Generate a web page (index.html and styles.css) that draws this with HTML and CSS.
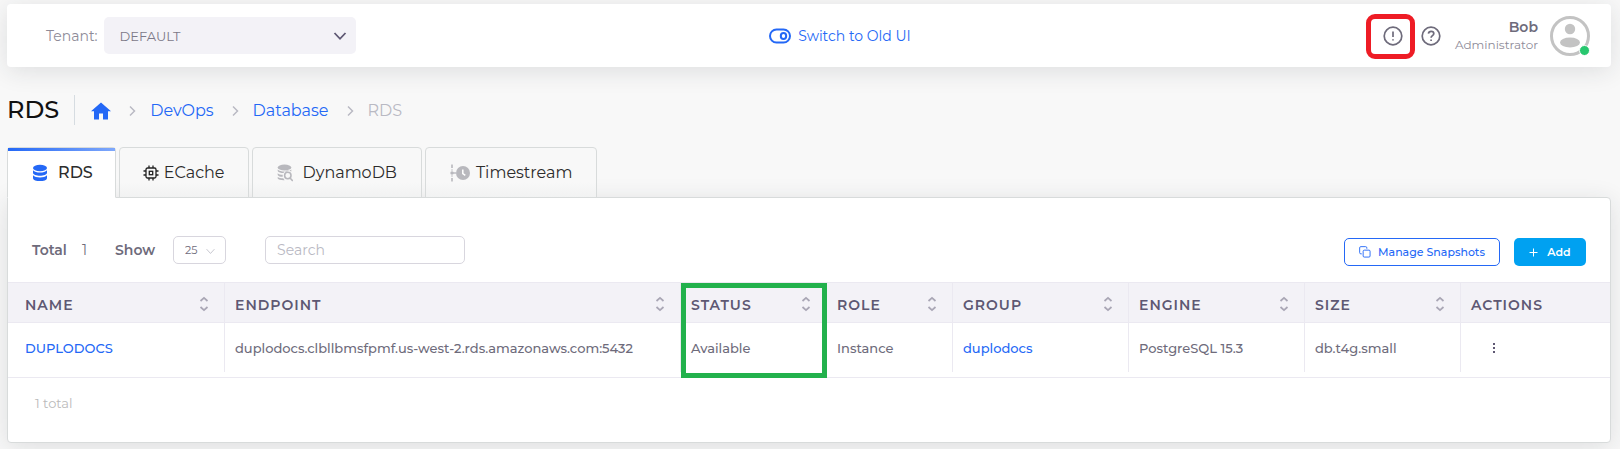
FILE: index.html
```html
<!DOCTYPE html>
<html lang="en">
<head>
<meta charset="utf-8">
<title>RDS</title>
<link rel="stylesheet" href="styles.css">
</head>
<body>
<svg class="sprite" aria-hidden="true">
  <symbol id="chevron-right" viewBox="0 0 14 14"><path d="M5 2.500l4.500 4.500L5 11.500"/></symbol>
  <symbol id="sort" viewBox="0 0 10 16"><path d="M1.500 5L5 1.800 8.500 5M1.500 11L5 14.200 8.500 11"/></symbol>
</svg>

<header class="topbar">
  <div class="tenant">
    <label for="tenant">Tenant:</label>
    <span class="select-wrap">
      <select id="tenant" class="tenant-select"><option>DEFAULT</option></select>
      <svg class="caret caret-lg" viewBox="0 0 14 14"><path d="M1.500 4L7 9.800 12.500 4"/></svg>
    </span>
  </div>
  <a class="switch" href="#">
    <svg class="switch-icon" viewBox="0 0 22 16"><rect x="1" y="1.500" width="20" height="13" rx="6.500"/><ellipse cx="14.500" cy="8" rx="2.700" ry="3"/></svg>
    Switch to Old UI
  </a>
  <div class="user-area">
    <button class="icon-btn flagged" aria-label="Alerts">
      <svg class="round-icon" viewBox="0 0 20 20"><circle cx="10" cy="10" r="8.800"/><path d="M10 5.500v5.500M10 13.200v1.300"/></svg>
    </button>
    <button class="icon-btn" aria-label="Help">
      <svg class="round-icon" viewBox="0 0 20 20"><circle cx="10" cy="10" r="8.800"/><path d="M7.400 7.600c.300-1.500 1.400-2.200 2.700-2.200 1.500 0 2.700.900 2.700 2.300 0 1.900-2.700 2-2.700 4M10.100 13.600v1.300"/></svg>
    </button>
    <div class="user-text"><strong>Bob</strong><span>Administrator</span></div>
    <div class="avatar">
      <svg viewBox="0 0 40 40"><circle cx="20" cy="20" r="18.500" fill="#fff" stroke="#c3c3c3" stroke-width="3"/><circle cx="20" cy="13" r="5.200" fill="#c3c3c3"/><ellipse cx="20" cy="26.500" rx="10" ry="5" fill="#c3c3c3"/></svg>
      <span class="online"></span>
    </div>
  </div>
</header>

<div class="page-head">
  <h1>RDS</h1>
  <nav class="crumbs" aria-label="Breadcrumb">
    <a href="#" aria-label="Home"><svg class="home" viewBox="0 0 20 18"><path d="M10 .500L0 9.300h3V17.500h5v-6h4v6h5V9.300h3z"/></svg></a>
    <svg class="sep"><use href="#chevron-right"/></svg>
    <a href="#">DevOps</a>
    <svg class="sep"><use href="#chevron-right"/></svg>
    <a href="#">Database</a>
    <svg class="sep"><use href="#chevron-right"/></svg>
    <span>RDS</span>
  </nav>
</div>

<main>
  <nav class="tabs">
    <a class="tab active" href="#">
      <svg class="tab-icon blue" viewBox="0 0 16 18"><ellipse cx="8" cy="4" rx="7" ry="3.300"/><path d="M1 6.200c1.500 1.700 4 2.400 7 2.400s5.500-.700 7-2.400v2.600c0 1.900-3.500 3-7 3s-7-1.100-7-3zM1 11.300c1.500 1.500 4 2.200 7 2.200s5.500-.700 7-2.200v2.600c0 2.100-3.500 3.200-7 3.200s-7-1.100-7-3.200z"/></svg>
      RDS
    </a>
    <a class="tab near compact" href="#">
      <svg class="tab-icon chip" viewBox="0 0 16 18"><rect x="3" y="4" width="10" height="10" rx="1.500"/><rect x="6.300" y="7.300" width="3.400" height="3.400"/><path d="M6 1.500V4M10 1.500V4M6 14v2.500M10 14v2.500M.500 7H3M.500 11H3M13 7h2.500M13 11h2.500"/></svg>
      ECache
    </a>
    <a class="tab" href="#">
      <svg class="tab-icon gray" viewBox="0 0 16 18"><ellipse cx="7.500" cy="3.500" rx="6.800" ry="3"/><path d="M.700 5.500c1.500 1.500 4 2 6.800 2s5.300-.500 6.800-2v2c-4-2-6.800-.400-7.800 1.500-2.500 0-5-.500-5.800-2zM.700 9.300c1 1 3 1.500 5 1.500v2c-2.200 0-4.400-.500-5-1.800zM.700 12.900c1 .900 3 1.300 5.600 1.400.400.900.800 1.400 1.300 1.900-3 .100-6.200-.300-6.900-1.700z"/><circle class="lens" cx="10.800" cy="11.500" r="3.200"/><path class="lens" d="M13 14l2.800 3"/></svg>
      DynamoDB
    </a>
    <a class="tab near" href="#">
      <svg class="time-icon gray" viewBox="0 0 20 18"><path class="dash" d="M2 .500v3.500M2 14v3.500M2 5.500v1M2 11.500v1"/><circle cx="2" cy="9" r="1.700"/><path d="M3 8.300h3v1.400H3z"/><circle cx="13" cy="9" r="7"/><path class="hand" d="M12.800 5.500V9.500l2.500 1.800"/></svg>
      Timestream
    </a>
  </nav>

  <section class="card">
    <div class="toolbar">
      <span class="total"><b>Total</b> 1</span>
      <label class="show" for="size">Show</label>
      <span class="select-wrap">
        <select id="size" class="size-select"><option>25</option></select>
        <svg class="caret caret-sm" viewBox="0 0 14 14"><path d="M2 4l5 5.500L12 4"/></svg>
      </span>
      <input class="search" type="text" placeholder="Search" aria-label="Search">
      <div class="actions">
        <button class="btn outline"><svg class="copy" viewBox="0 0 13 13"><path d="M3 8.500H2A1.300 1.300 0 0 1 .700 7.200V2A1.300 1.300 0 0 1 2 .700h5.200A1.300 1.300 0 0 1 8.500 2v1"/><rect x="4.500" y="4.500" width="7.500" height="7.500" rx="1.200"/></svg>Manage Snapshots</button>
        <button class="btn solid"><svg class="plus" viewBox="0 0 9 9"><path d="M4.500 .500v8M.500 4.500h8"/></svg>Add</button>
      </div>
    </div>

    <table>
      <colgroup><col class="c-name"><col class="c-endpoint"><col class="c-status"><col class="c-role"><col class="c-group"><col class="c-group"><col class="c-size"><col></colgroup>
      <thead>
        <tr>
          <th><div>NAME<svg class="sort"><use href="#sort"/></svg></div></th>
          <th><div>ENDPOINT<svg class="sort"><use href="#sort"/></svg></div></th>
          <th class="marked"><div>STATUS<svg class="sort"><use href="#sort"/></svg></div></th>
          <th><div>ROLE<svg class="sort"><use href="#sort"/></svg></div></th>
          <th><div>GROUP<svg class="sort"><use href="#sort"/></svg></div></th>
          <th><div>ENGINE<svg class="sort"><use href="#sort"/></svg></div></th>
          <th><div>SIZE<svg class="sort"><use href="#sort"/></svg></div></th>
          <th><div>ACTIONS</div></th>
        </tr>
      </thead>
      <tbody>
        <tr>
          <td><div><a href="#">DUPLODOCS</a></div></td>
          <td><div>duplodocs.clbllbmsfpmf.us-west-2.rds.amazonaws.com:5432</div></td>
          <td><div>Available</div></td>
          <td><div>Instance</div></td>
          <td><div><a href="#">duplodocs</a></div></td>
          <td><div>PostgreSQL 15.3</div></td>
          <td><div>db.t4g.small</div></td>
          <td><div><button class="more" aria-label="Row actions"><svg viewBox="0 0 4 12"><path d="M1 1h2v2H1zM1 5h2v2H1zM1 9h2v2H1z"/></svg></button></div></td>
        </tr>
      </tbody>
    </table>
    <div class="foot">1 total</div>
  </section>
</main>
</body>
</html>
```
FILE: styles.css
```css
*, *::before, *::after { box-sizing: border-box; }
body {
  margin: 0;
  padding: 4px 9px 7px 7px;
  background: #f8f8f8;
  color: #6e6b7b;
  font-family: Montserrat, Inter, "Open Sans", sans-serif;
  font-size: 13px;
}
a { color: #2468f6; text-decoration: none; }
button, select, input { font-family: inherit; color: inherit; }
svg { display: block; flex: none; fill: none; }
.sprite { position: absolute; width: 0; height: 0; }

/* Top bar */
.topbar {
  display: grid;
  grid-template-columns: 1fr auto 1fr;
  align-items: center;
  height: 63px;
  padding: 0 21px 0 39px;
  background: #fff;
  border-radius: 4px;
  box-shadow: 0 4px 24px rgba(34, 41, 47, .12);
}
.tenant { display: flex; align-items: center; gap: 6px; font-size: 14px; color: #8e8b98; }
.select-wrap { position: relative; display: flex; }
.select-wrap select { appearance: none; outline: none; }
.tenant-select {
  width: 252px;
  height: 37px;
  padding: 0 16px;
  border: 0;
  border-radius: 5px;
  background: #f3f2f7;
  font-size: 13px;
  color: #7c7988;
}
.caret { position: absolute; pointer-events: none; stroke: #5e5873; }
.caret-lg { width: 14px; height: 14px; right: 9px; top: 12px; stroke-width: 1.8; }
.caret-sm { width: 11px; height: 11px; right: 10px; top: 10px; stroke: #b9b9c3; stroke-width: 1; }
.switch { display: flex; align-items: center; gap: 7px; padding-left: 44px; font-size: 14px; }
.switch-icon { width: 22px; height: 16px; stroke: currentColor; stroke-width: 2; }
.user-area { display: flex; align-items: center; justify-content: flex-end; }
.icon-btn { position: relative; padding: 0; margin-right: 18px; border: 0; background: none; }
.icon-btn + .user-text { margin-left: -4px; }
.round-icon { width: 20px; height: 20px; stroke: #6e6b7b; stroke-width: 1.7; }
.flagged::after {
  content: "";
  position: absolute;
  inset: -12px -12px -13px -17px;
  border: 5px solid #ee1c25;
  border-radius: 9px;
}
.user-text { display: flex; flex-direction: column; align-items: flex-end; gap: 2px; margin-right: 12px; font-size: 12px; line-height: 16px; color: #8e8b98; }
.user-text strong { font-size: 14px; font-weight: 600; color: #6e6b7b; }
.avatar { position: relative; width: 40px; height: 40px; }
.online { position: absolute; right: 0; bottom: 0; width: 11px; height: 11px; border: 1px solid #fff; border-radius: 50%; background: #28c76f; }

/* Title and breadcrumb */
.page-head { display: flex; align-items: center; height: 30px; margin-top: 28px; }
h1 { margin: 0; padding-right: 15px; border-right: 1px solid #d6dce1; font-size: 24px; line-height: 30px; font-weight: 500; color: #111; }
.crumbs { display: flex; align-items: center; padding-left: 16px; padding-top: 1px; font-size: 16px; color: #b9b9c3; }
.home { width: 20px; height: 18px; fill: #2468f6; }
.sep { width: 14px; height: 14px; margin: 0 11px 0 14px; stroke: #b9b9c3; stroke-width: 1.5; }

/* Tabs */
.tabs { position: relative; display: flex; gap: 3px; height: 51px; margin-top: 22px; margin-bottom: -1px; }
.tab {
  position: relative;
  display: flex;
  align-items: center;
  justify-content: center;
  gap: 10px;
  padding: 0 24px;
  border: 1px solid #d8dbdb;
  border-radius: 4px 4px 0 0;
  background: linear-gradient(#f8f8f8 70%, #f1f2f2);
  color: #2c2c2c;
  font-size: 16px;
}
.tab.active { padding-right: 22px; border-bottom-color: #fff; background: #fff; font-weight: 500; }
.tab.active::before { content: ""; position: absolute; inset: 0 0 auto; height: 3px; background: linear-gradient(90deg, #2468f6, #7fa8fb); }
.tab-icon { width: 16px; height: 18px; }
.time-icon { width: 20px; height: 18px; }
.near { gap: 6px; }
.compact { gap: 5px; padding: 0 23px; }
.blue { fill: #2468f6; }
.gray { fill: #b8b8bd; }
.chip { stroke: #222; stroke-width: 1.3; }
.lens { fill: none; stroke: #b8b8bd; stroke-width: 1.6; }
.dash { stroke: #b8b8bd; stroke-width: 1.6; }
.hand { fill: none; stroke: #fff; stroke-width: 1.5; }

/* Card */
.card { background: #fff; border: 1px solid #d8dbdb; border-radius: 0 4px 4px 4px; box-shadow: 0 4px 24px rgba(34, 41, 47, .12); }
.toolbar { display: flex; align-items: center; padding: 36px 24px 17px; font-size: 14px; }
.total { display: flex; gap: 15px; margin-right: 28px; }
.total b, .show { font-weight: 600; }
.show { margin-right: 18px; }
.size-select { width: 53px; height: 28px; padding: 0 11px; border: 1px solid #d8d6de; border-radius: 5px; background: #fff; font-size: 11px; }
.search { width: 200px; height: 28px; margin-left: 39px; padding: 0 11px; border: 1px solid #d8d6de; border-radius: 5px; font-size: 14px; outline: none; }
.search::placeholder { color: #b9b9c3; opacity: 1; }
.actions { display: flex; gap: 14px; margin-left: auto; padding-top: 4px; margin-bottom: -1px; }
.btn { display: flex; align-items: center; justify-content: center; height: 28px; border-radius: 5px; font-size: 11px; font-weight: 500; }
.outline { width: 156px; gap: 7px; padding: 0; border: 1px solid #2468f6; background: #fff; color: #2468f6; }
.solid { width: 72px; gap: 9px; padding: 0; border: 0; background: #00a1f1; color: #fff; font-weight: 600; }
.copy { width: 12px; height: 12px; stroke: currentColor; stroke-width: 1; }
.plus { width: 9px; height: 9px; stroke: currentColor; stroke-width: 1; }

/* Table */
table { width: 100%; table-layout: fixed; border-collapse: separate; border-spacing: 0; }
.c-name { width: 217px; }
.c-endpoint { width: 456px; }
.c-status { width: 146px; }
.c-role { width: 126px; }
.c-group { width: 176px; }
.c-size { width: 156px; }
th, td { position: relative; padding: 0; text-align: left; border-bottom: 1px solid #ebe9f1; white-space: nowrap; }
th { border-top: 1px solid #ebe9f1; background: #f3f2f7; font-size: 14px; font-weight: 600; letter-spacing: 1px; color: #5e5873; }
th div, td div { display: flex; align-items: center; padding-left: 10px; border-right: 1px solid #ebe9f1; }
th:first-child div, td:first-child div { padding-left: 17px; }
th:last-child div, td:last-child div { border-right: 0; }
th div { height: 39px; padding-top: 5px; justify-content: space-between; padding-right: 15px; }
td { padding-bottom: 5px; font-size: 13px; font-weight: 500; }
td div { height: 49px; }
.sort { width: 10px; height: 16px; margin-bottom: 2px; stroke: #a9a6b5; stroke-width: 1.7; }
.marked::after {
  content: "";
  position: absolute;
  z-index: 1;
  left: 0;
  top: 0;
  width: 100%;
  height: 95px;
  border: 5px solid #22b14c;
}
.more { width: 24px; height: 24px; margin-left: 11px; padding: 0 10px; border: 0; background: none; }
.more svg { width: 4px; height: 12px; fill: #5e5873; }
.foot { height: 64px; padding: 15px 27px; line-height: 20px; font-size: 13px; color: #bababa; }
```
